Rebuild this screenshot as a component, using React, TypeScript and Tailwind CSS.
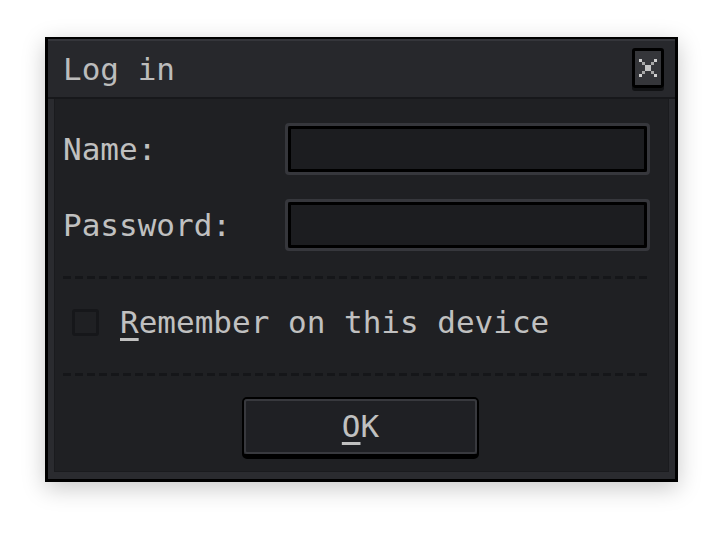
import React from "react";

const font = "font-['DejaVu_Sans_Mono','Liberation_Mono',monospace]";

function Dashes() {
  return (
    <div className="h-[3px] w-full bg-[linear-gradient(to_right,#151619_0_8px,transparent_8px_12px)] bg-size-[12px_3px] bg-repeat-x" />
  );
}

function CloseIcon() {
  const cells: [number, number, string][] = [
    [0, 0, "#d0d0d0"], [5, 0, "#d0d0d0"],
    [1, 1, "#a8a8a8"], [4, 1, "#a8a8a8"],
    [2, 2, "#c4c4c4"], [3, 2, "#c4c4c4"],
    [2, 3, "#c4c4c4"], [3, 3, "#c4c4c4"],
    [1, 4, "#a8a8a8"], [4, 4, "#a8a8a8"],
    [0, 5, "#d0d0d0"], [5, 5, "#d0d0d0"],
  ];
  return (
    <svg width="18" height="18" viewBox="0 0 18 18" shapeRendering="crispEdges">
      {cells.map(([x, y, c], i) => (
        <rect key={i} x={x * 3} y={y * 3} width="3" height="3" fill={c} />
      ))}
    </svg>
  );
}

function TextInput() {
  return (
    <div className="h-[52px] w-[365px] rounded-[4px] border-[3px] border-[#36373c]">
      <div className="h-full w-full rounded-[2px] border-[3px] border-black bg-[#1c1d20]" />
    </div>
  );
}

export default function App() {
  return (
    <div className={`min-h-[534px] w-[724px] bg-white pl-[45px] pt-[37px] ${font}`}>
      <div className="w-[633px] border-x-[3px] border-b-[3px] border-t-2 border-black bg-[#2a2b2f] shadow-[0_6px_22px_rgba(0,0,0,0.22)]">
        {/* title bar */}
        <div className="flex h-[58px] items-center justify-between border-t-2 border-[#35363b] bg-[#27282c] pl-[15px] pr-[11px]">
          <span className="text-[31px] leading-none text-[#bcbcbc]">Log in</span>
          <div className="mb-[2px] rounded-[3px] border-[3px] border-black shadow-[0_3px_0_#111214]">
            <div className="flex h-[34px] w-[26px] items-center justify-center bg-[#35363a]">
              <CloseIcon />
            </div>
          </div>
        </div>
        <div className="h-[2px] bg-[#17181b]" />

        {/* body */}
        <div className="px-[6px] pb-[7px]">
          <div className="flex flex-col border-x border-b border-[#1a1b1e] bg-[#1f2023] pb-[12px] pl-[8px] pr-[18px] pt-[24px] text-[31px] leading-none text-[#c0c0c0]">
            <div className="flex items-center">
              <span className="w-[222px]">Name:</span>
              <TextInput />
            </div>
            <div className="mt-[24px] flex items-center">
              <span className="w-[222px]">Password:</span>
              <TextInput />
            </div>

            <div className="mt-[25px]">
              <Dashes />
            </div>

            <div className="mt-[28px] flex items-center">
              <div className="ml-[9px] h-[27px] w-[27px] rounded-[3px] border-[3px] border-[#16171a]" />
              <span className="ml-[21px]">
                <span className="underline decoration-3 underline-offset-[5px]">R</span>emember on this device
              </span>
            </div>

            <div className="mt-[35px]">
              <Dashes />
            </div>

            <div className="mt-[21px] flex justify-center pl-[8px]">
              <button className="h-[62px] w-[237px] rounded-[5px] border-2 border-b-[5px] border-black">
                <div className="flex h-full w-full items-center justify-center rounded-[3px] border-2 border-[#38393e] bg-[#1f2024] text-[31px] text-[#c0c0c0]">
                  <span className="underline decoration-3 underline-offset-[5px]">O</span>K
                </div>
              </button>
            </div>
          </div>
        </div>
      </div>
    </div>
  );
}
